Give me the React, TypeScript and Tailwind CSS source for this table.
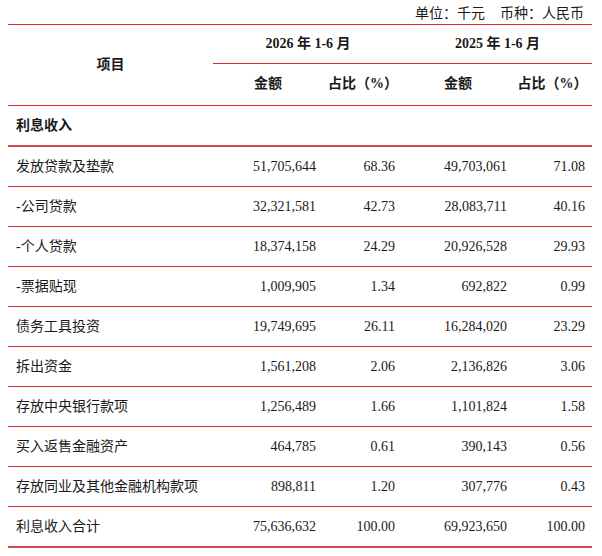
import React from "react";

const rows: [string, string, string, string, string][] = [
  ["发放贷款及垫款", "51,705,644", "68.36", "49,703,061", "71.08"],
  ["-公司贷款", "32,321,581", "42.73", "28,083,711", "40.16"],
  ["-个人贷款", "18,374,158", "24.29", "20,926,528", "29.93"],
  ["-票据贴现", "1,009,905", "1.34", "692,822", "0.99"],
  ["债务工具投资", "19,749,695", "26.11", "16,284,020", "23.29"],
  ["拆出资金", "1,561,208", "2.06", "2,136,826", "3.06"],
  ["存放中央银行款项", "1,256,489", "1.66", "1,101,824", "1.58"],
  ["买入返售金融资产", "464,785", "0.61", "390,143", "0.56"],
  ["存放同业及其他金融机构款项", "898,811", "1.20", "307,776", "0.43"],
  ["利息收入合计", "75,636,632", "100.00", "69,923,650", "100.00"],
];

const font = { fontFamily: '"Liberation Serif", "Noto Sans CJK SC", serif' };

export default function App() {
  return (
    <div className="w-[602px] h-[556px] bg-white text-[#1a1a1a] text-[14px] leading-none" style={font}>
      <div className="h-[24px] flex items-center justify-end pr-[18px] pt-[4px] gap-[15px]">
        <span>单位：千元</span>
        <span>币种：人民币</span>
      </div>
      <div className="ml-[8px] w-[584px]">
        {/* header */}
        <div className="border-t-[1.5px] border-[#de2a2e] flex">
          <div className="w-[205px] h-[80px] flex items-center justify-center font-bold">项目</div>
          <div className="flex-1 flex flex-col">
            <div className="h-[39px] flex font-bold border-b-[1.5px] border-[#de2a2e]">
              <div className="w-[190px] flex items-center justify-center">2026 年 1-6 月</div>
              <div className="flex-1 flex items-center justify-center">2025 年 1-6 月</div>
            </div>
            <div className="h-[40px] flex font-bold">
              <div className="w-[110px] flex items-center justify-center">金额</div>
              <div className="w-[80px] flex items-center justify-center">占比（%）</div>
              <div className="w-[110px] flex items-center justify-center">金额</div>
              <div className="flex-1 flex items-center justify-center">占比（%）</div>
            </div>
          </div>
        </div>
        <div className="border-t-[1.5px] border-[#de2a2e] h-[40px] flex items-center pl-[8px] font-bold">
          利息收入
        </div>
        <div className="border-t-[2px] border-[#cf4a4c]">
          {rows.map((r, i) => (
            <div
              key={i}
              className={
                i === 0
                  ? "h-[39px] flex items-center"
                  : "h-[40px] flex items-center border-t-[1.5px] border-[#de2a2e]"
              }
            >
              <div className="w-[205px] pl-[8px]">{r[0]}</div>
              <div className="w-[110px] text-right pr-[7px]">{r[1]}</div>
              <div className="w-[80px] text-right pr-[8px]">{r[2]}</div>
              <div className="w-[110px] text-right pr-[6px]">{r[3]}</div>
              <div className="flex-1 text-right pr-[7px]">{r[4]}</div>
            </div>
          ))}
        </div>
        <div className="border-t-[2px] border-[#cf4a4c]" />
      </div>
    </div>
  );
}
